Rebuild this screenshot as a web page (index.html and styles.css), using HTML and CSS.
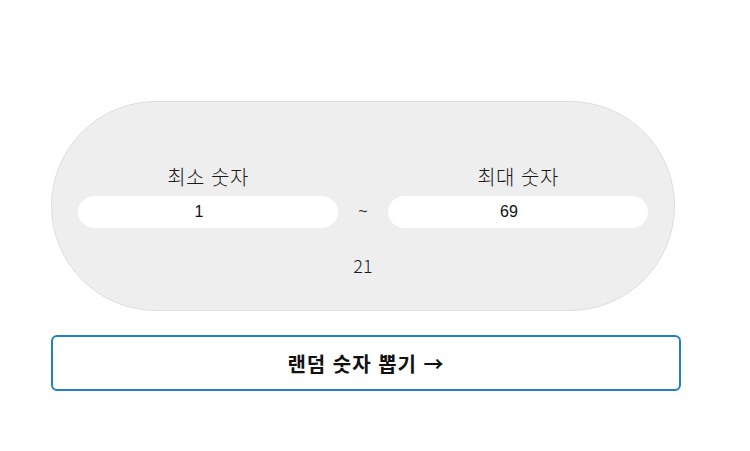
FILE: index.html
```html
<!DOCTYPE html>
<html lang="ko">
<head>
<meta charset="utf-8">
<title>랜덤 숫자 뽑기</title>
<link rel="stylesheet" href="styles.css">
</head>
<body>
<div class="wrap">
  <div class="pill">
    <div class="grid">
      <label class="label" for="min">최소 숫자</label>
      <span></span>
      <label class="label" for="max">최대 숫자</label>
      <input class="num" id="min" type="number" value="1">
      <span class="tilde">~</span>
      <input class="num" id="max" type="number" value="69">
    </div>
    <div class="result">21</div>
  </div>
  <button class="btn" type="button">랜덤 숫자 뽑기 →</button>
</div>
</body>
</html>
```

FILE: styles.css
```css
html, body {
  margin: 0;
  padding: 0;
  background: #fff;
}
body {
  font-family: "Noto Sans CJK KR", "Noto Sans", sans-serif;
  color: #222;
}
.wrap {
  width: 630px;
  margin: 101px 0 0 51px;
  display: flex;
  flex-direction: column;
  gap: 24px;
}
.pill {
  box-sizing: border-box;
  width: 624px;
  height: 210px;
  background: #eeeeee;
  border: 1px solid #dedede;
  border-radius: 105px;
  padding: 61px 26px 0;
  display: flex;
  flex-direction: column;
  align-items: stretch;
}
.grid {
  display: grid;
  grid-template-columns: 1fr 50px 1fr;
  row-gap: 6px;
  align-items: center;
}
.label {
  text-align: center;
  font-size: 20px;
  line-height: 27px;
  font-weight: 300;
  letter-spacing: 0.5px;
  color: #1a1a1a;
}
.num {
  box-sizing: border-box;
  width: 100%;
  height: 32px;
  border: none;
  border-radius: 16px;
  background: #fff;
  text-align: center;
  font-family: "Liberation Sans", Arial, sans-serif;
  font-size: 16px;
  color: #111;
  padding: 0 18px 0 0;
  outline: none;
  -moz-appearance: textfield;
}
.num::-webkit-inner-spin-button,
.num::-webkit-outer-spin-button {
  -webkit-appearance: none;
  margin: 0;
}
.tilde {
  text-align: center;
  font-family: "Liberation Sans", Arial, sans-serif;
  font-size: 16px;
  color: #333;
}
.result {
  margin-top: 26px;
  text-align: center;
  font-size: 18px;
  line-height: 22px;
  font-weight: 300;
  color: #1a1a1a;
}
.btn {
  box-sizing: border-box;
  width: 630px;
  height: 56px;
  background: #fff;
  border: 2px solid #1f7fc8;
  border-radius: 6px;
  font-family: "Noto Sans CJK KR", "Noto Sans", sans-serif;
  font-size: 20px;
  font-weight: 700;
  letter-spacing: 1px;
  color: #111;
  cursor: pointer;
}
```
